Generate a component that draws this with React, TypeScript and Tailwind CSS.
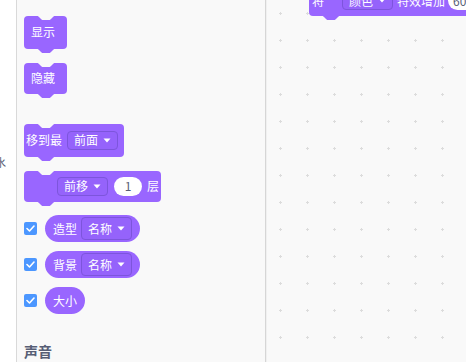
import React from "react";

const font = { fontFamily: '"Noto Sans CJK SC", "Noto Sans", sans-serif' };

function Caret() {
  return (
    <svg width="8" height="5" viewBox="0 0 8 5" className="shrink-0">
      <path d="M0.5 0.5 H7.5 L4 4.5 Z" fill="#fff" />
    </svg>
  );
}

function Notch({ fill, className }: { fill: string; className: string }) {
  return (
    <svg width="18" height="4" viewBox="0 0 18 4" className={className}>
      <path
        d="M0 0 c1 0 1.5 .5 2 1 l2 2 c.5 .5 1 1 2 1 h6 c1 0 1.5 -.5 2 -1 l2 -2 c.5 -.5 1 -1 2 -1 z"
        fill={fill}
      />
    </svg>
  );
}

function Stack({
  children,
  className = "",
  bg = "#f9f9f9",
}: {
  children: React.ReactNode;
  className?: string;
  bg?: string;
}) {
  return (
    <div
      className={`relative flex items-center whitespace-nowrap bg-[#9966ff] rounded-[4px] text-white text-[12px] ${className}`}
    >
      <Notch fill={bg} className="absolute left-[13px] top-0" />
      {children}
      <Notch fill="#9966ff" className="absolute left-[13px] top-full" />
    </div>
  );
}

function Dropdown({ label, h = "h-[19px]" }: { label: string; h?: string }) {
  return (
    <div
      className={`flex shrink-0 items-center gap-[5px] px-[6px] ${h} border border-[#7d55dc] bg-[#9563fb] rounded-[4px]`}
    >
      <span className="leading-none">{label}</span>
      <Caret />
    </div>
  );
}

function Check() {
  return (
    <div className="w-[13px] h-[13px] rounded-[2px] bg-[#4c97ff] flex items-center justify-center">
      <svg width="9" height="7" viewBox="0 0 9 7">
        <path d="M1 3.5 L3.5 6 L8 1" stroke="#fff" strokeWidth="1.6" fill="none" strokeLinecap="round" strokeLinejoin="round" />
      </svg>
    </div>
  );
}

function Reporter({ label, menu }: { label: string; menu?: string }) {
  return (
    <div className="flex items-center gap-[8px]">
      <Check />
      <div className="flex items-center h-[27px] rounded-full bg-[#9966ff] text-white text-[12px] pl-[8px] pr-[8px]">
        <span className="leading-none">{label}</span>
        {menu && (
          <div className="ml-[4px]">
            <Dropdown label={menu} h="h-[23px]" />
          </div>
        )}
      </div>
    </div>
  );
}

export default function App() {
  return (
    <div className="flex w-[466px] h-[362px] overflow-hidden bg-[#f9f9f9]" style={font}>
      {/* category strip */}
      <div className="w-[17px] shrink-0 bg-white border-r border-[#d9d9d9] overflow-hidden">
        <div className="mt-[157px] -ml-[5px] text-[11px] text-[#575e75] leading-none whitespace-nowrap">
          水
        </div>
      </div>

      {/* palette */}
      <div className="w-[249px] shrink-0 border-r border-[#d6d6d6] pl-[7px] pt-[16px] flex flex-col items-start">
        <Stack className="w-[43px] h-[33px] pl-[7px]">显示</Stack>
        <Stack className="w-[43px] h-[32px] pl-[7px] mt-[14px]">隐藏</Stack>
        <Stack className="h-[33px] pl-[2px] pr-[6px] mt-[30px] gap-[5px]">
          <span>移到最</span>
          <Dropdown label="前面" />
        </Stack>
        <Stack className="h-[32px] pl-[33px] pr-[2px] mt-[14px]">
          <Dropdown label="前移" />
          <div className="ml-[6px] w-[28px] h-[19px] rounded-full bg-white text-[#575e75] flex items-center justify-center leading-none">
            1
          </div>
          <span className="ml-[5px]">层</span>
        </Stack>
        <div className="mt-[13px] flex flex-col gap-[9px]">
          <Reporter label="造型" menu="名称" />
          <Reporter label="背景" menu="名称" />
          <Reporter label="大小" />
        </div>
        <div className="mt-[27px] text-[14px] font-bold text-[#575e75]">声音</div>
      </div>

      {/* canvas */}
      <div className="relative flex-1 border-l border-[#f0f0f0] bg-[#f9f9f9] bg-[radial-gradient(circle,#dcdcdc_1px,transparent_1.2px)] bg-[size:27px_27px] bg-[position:0px_0px]">
        <div className="absolute left-[42px] -top-[15px] w-max">
          <Stack className="h-[31px] pl-[3px] pr-[40px]" bg="#f9f9f9">
            <span>将</span>
            <div className="ml-[18px]">
              <Dropdown label="颜色" />
            </div>
            <span className="ml-[4px]">特效增加</span>
            <div className="ml-[3px] w-[32px] h-[19px] rounded-full bg-white text-[#575e75] flex items-center pl-[5px] leading-none">
              60
            </div>
          </Stack>
        </div>
      </div>
    </div>
  );
}
